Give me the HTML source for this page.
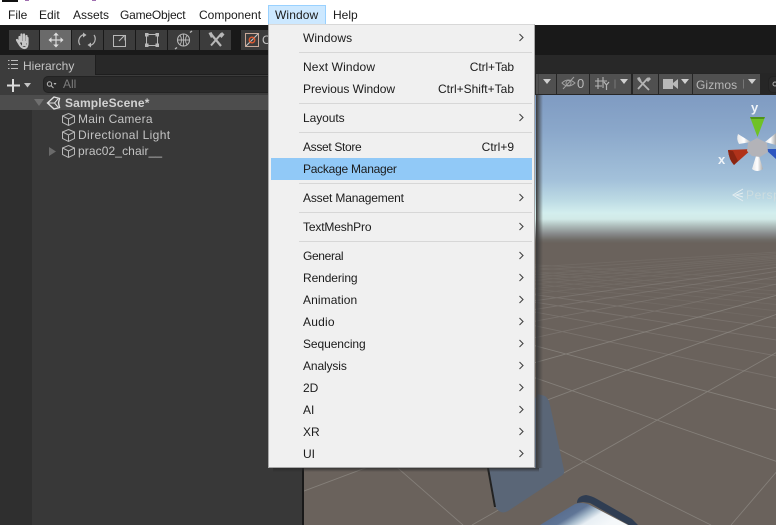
<!DOCTYPE html>
<html><head><meta charset="utf-8">
<style>
html,body{margin:0;padding:0;width:776px;height:525px;overflow:hidden;background:#191919}
body{position:relative;font-family:"Liberation Sans",sans-serif;font-size:12px}
.a{position:absolute}
.t{position:absolute;white-space:nowrap;line-height:16px;height:16px}
.mb{color:#1a1a1a;top:7px}
.b{position:absolute;top:30px;height:20px;width:31px;background:#3c3c3c}
.sb{position:absolute;top:74px;height:20px;background:#505050}
.h{color:#c4c4c4}
.m{color:#1b1b1b;left:303px}
.r{color:#1b1b1b;right:262px}
.sep{position:absolute;left:299px;width:233px;height:1px;background:#d7d7d7}
svg{position:absolute;overflow:visible}
</style></head><body>

<!-- Menu bar -->
<div class="a" style="left:0;top:0;width:776px;height:25px;background:#fff"></div>
<div class="a" style="left:2px;top:0;width:16px;height:2px;background:#111"></div>
<div class="a" style="left:25px;top:0;width:4px;height:1px;background:#a070b0"></div>
<div class="a" style="left:92px;top:0;width:4px;height:1px;background:#a070b0"></div>
<div class="a" style="left:268px;top:5px;width:56px;height:18px;background:#cce8ff;border:1px solid #99d1ff"></div>
<div class="t mb" style="left:8px">File</div>
<div class="t mb" style="left:39px">Edit</div>
<div class="t mb" style="left:73px">Assets</div>
<div class="t mb" style="left:120px;letter-spacing:-.2px">GameObject</div>
<div class="t mb" style="left:199px">Component</div>
<div class="t mb" style="left:275px;letter-spacing:.1px">Window</div>
<div class="t mb" style="left:333px">Help</div>

<!-- Toolbar -->
<div class="a" style="left:0;top:25px;width:776px;height:30px;background:#191919"></div>
<div class="b" style="left:9px;width:30px"></div>
<div class="b" style="left:40px;background:#6a6a6a"></div>
<div class="b" style="left:72px"></div>
<div class="b" style="left:104px"></div>
<div class="b" style="left:136px"></div>
<div class="b" style="left:168px"></div>
<div class="b" style="left:200px"></div>
<div class="b" style="left:241px;width:40px"></div>
<svg style="left:0;top:0" width="300" height="55" fill="none" stroke="#b8b8b8">
 <path d="M19.500 37v5M21.500 34.500v7M24 34.500v7M26.500 36v6M17 40l3 5q2 3 4.500 3t3-4v-6" stroke="#c6c6c6" stroke-width="2.200" stroke-linecap="round"/>
 <path d="M22 41h4v5h-4z" fill="#c6c6c6" stroke="none"/>
 <path d="M56 34v12M50 40h12" stroke="#d8d8d8" stroke-width="1.200"/>
 <path d="M56 32.500l-2.800 3h5.600zM56 47.500l-2.800-3h5.600zM48.500 40l3-2.800v5.600zM63.500 40l-3-2.800v5.600z" fill="#dedede" stroke="none"/>
 <path d="M85 34.500a6.800 6.800 0 0 0-4 10.500M91 45.500a6.800 6.800 0 0 0 4-10.500" stroke-width="1.200" transform="translate(-1 0)"/>
 <path d="M84 32.500l3.500 2.500-3.500 2.500zM92 47.500l-3.500-2.500 3.500-2.500z" fill="#b8b8b8" stroke="none" transform="translate(-1 0)"/>
 <rect x="113.500" y="35.500" width="12" height="11" stroke-width="1"/>
 <path d="M119 41l5-5M120 35.500h5v5" stroke-width="1.100"/>
 <rect x="146.500" y="34.500" width="11" height="11" stroke-width="1"/>
 <path d="M145 33h3.500v3.500h-3.500zM155.500 33h3.500v3.500h-3.500zM145 43.500h3.500v3.500h-3.500zM155.500 43.500h3.500v3.500h-3.500z" fill="#b8b8b8" stroke="none"/>
 <circle cx="183.500" cy="40" r="6" stroke-width="1.100"/>
 <path d="M177 40h13M183.500 33.500v13M180 35q3 5 0 10M187 35q-3 5 0 10" stroke-width=".9"/>
 <path d="M177 47.500l-2 1.500M190 32.500l2-1.500" stroke-width="1.400"/>
 <path d="M211 34l10 12" stroke-width="2.200"/>
 <path d="M221.500 33.500l-10.500 12" stroke-width="2"/>
 <path d="M208.500 33l3-1 2 4-2.500 2zM222 32l2.500 2.500-3 3.500-2.500-2.500z" fill="#b8b8b8" stroke="none"/>
 <rect x="245.500" y="33.500" width="13" height="13" stroke="#c8a898" stroke-width="1"/>
 <path d="M246 46l12-12" stroke="#c8c8c8" stroke-width="1"/>
 <circle cx="252" cy="40" r="2.800" stroke="#e05a30" stroke-width="1.300"/>
</svg>
<div class="t" style="left:262px;top:32px;color:#c4c4c4">C</div>

<!-- Tab row -->
<div class="a" style="left:0;top:55px;width:776px;height:19px;background:#282828"></div>
<div class="a" style="left:0;top:55px;width:95px;height:20px;background:#3c3c3c"></div>
<div class="a" style="left:95px;top:55px;width:1px;height:20px;background:#1e1e1e"></div>
<div class="a" style="left:96px;top:74px;width:206px;height:1px;background:#1e1e1e"></div>
<svg style="left:0;top:55px" width="30" height="20" fill="none" stroke="#bbb"><path d="M11 5.500h7M11 9.500h7M11 13.500h7M8 5.500h1.500M8 9.500h1.500M8 13.500h1.500"/></svg>
<div class="t" style="left:23px;top:58px;color:#c4c4c4">Hierarchy</div>

<!-- Hierarchy -->
<div class="a" style="left:0;top:75px;width:302px;height:20px;background:#3c3c3c"></div>
<div class="a" style="left:43px;top:76px;width:259px;height:15px;background:#2a2a2a;border-radius:5px 0 0 5px;border:1px solid #222;box-sizing:content-box"></div>
<svg style="left:0;top:75px" width="60" height="20" fill="none">
 <path d="M13 4v13M7 10.500h13" stroke="#dcdcdc" stroke-width="2"/>
 <path d="M24 8h7l-3.500 4.500z" fill="#c4c4c4"/>
 <circle cx="49.500" cy="9" r="2.200" stroke="#bbb"/><path d="M51 10.500l2.500 2.500" stroke="#bbb"/><path d="M53.500 8h3l-1.500 2z" fill="#bbb"/>
</svg>
<div class="t" style="left:63px;top:76px;color:#7c7c7c">All</div>
<div class="a" style="left:0;top:95px;width:32px;height:430px;background:#2f2f2f"></div>
<div class="a" style="left:32px;top:95px;width:270px;height:430px;background:#383838"></div>
<div class="a" style="left:0;top:95px;width:302px;height:15px;background:#4d4d4d"></div>
<div class="a" style="left:302px;top:55px;width:2px;height:470px;background:#191919"></div>
<svg style="left:0;top:95px" width="100" height="70" fill="none" stroke="#c6c6c6">
 <path d="M34 4h10l-5 7z" fill="#6f6f6f" stroke="none"/>
 <path d="M47.500 8l6.500-6 5.500 1.500L58.500 8l1 4.500-5.500 1.500z" stroke-width="1.400" stroke="#e0e0e0"/>
 <path d="M48 8h6.500l3.500-4M54.500 8l3.500 4" stroke="#e0e0e0"/>
 <path d="M68.500 18.500l6 2.500v6.500l-6 3-6-3V21zM62.500 21l6 3 6-3M68.500 24v6.500" stroke="#b8b8b8"/>
 <path d="M68.500 34.500l6 2.500v6.500l-6 3-6-3V37zM62.500 37l6 3 6-3M68.500 40v6.500" stroke="#b8b8b8"/>
 <path d="M68.500 50.500l6 2.500v6.500l-6 3-6-3V53zM62.500 53l6 3 6-3M68.500 56v6.500" stroke="#b8b8b8"/>
 <path d="M49 52l7 4.500-7 4.500z" fill="#6a6a6a" stroke="none"/>
</svg>
<div class="t" style="left:65px;top:95px;color:#d2d2d2;font-weight:bold;letter-spacing:.15px">SampleScene*</div>
<div class="t h" style="left:78px;top:111px;letter-spacing:.25px">Main Camera</div>
<div class="t h" style="left:78px;top:127px;letter-spacing:.38px">Directional Light</div>
<div class="t h" style="left:78px;top:143px;letter-spacing:.1px">prac02_chair__</div>

<!-- Scene -->
<div class="a" style="left:304px;top:95px;width:472px;height:430px;overflow:hidden;background:#6a625c">
 <div class="a" style="left:0;top:0;width:472px;height:150px;background:linear-gradient(to bottom,#7f9bc2 0,#8aa7ca 35px,#a3c1da 85px,#bcdae4 105px,#d3eeee 118px,#d2eae8 124px,#b2c2c0 130px,#87898a 139px,#6e6a65 145px,#6a625c 148px)"></div>
 <svg style="left:-304px;top:-95px" width="776" height="525" fill="none" stroke="#908c86" stroke-width=".9">
  <g stroke-opacity=".7"><path d="M137 240L463 525M137 240L711 525M137 240L960 525M137 240L1210 525M975 240L731 525M975 240L472 525M975 240L213 525M975 240L-48 525"/></g>
  <g stroke-opacity=".4"><path d="M137 240L1460 525M137 240L1710 525M137 240L1960 525M137 240L2210 525M975 240L-309 525M975 240L-570 525M975 240L-831 525M975 240L-1092 525"/></g>
  <g stroke-opacity=".2"><path d="M137 240L2460 525M137 240L2710 525M137 240L2960 525M137 240L3210 525M137 240L3460 525M137 240L3710 525M137 240L4210 525M137 240L4710 525M975 240L-1353 525M975 240L-1614 525M975 240L-1875 525M975 240L-2136 525M975 240L-2397 525M975 240L-2658 525M975 240L-3180 525M975 240L-3702 525"/></g>
 </svg>
 <svg style="left:-304px;top:-95px" width="776" height="525" stroke="none">
  <defs>
   <linearGradient id="seat2" x1="0" y1="0" x2="1" y2=".4"><stop offset="0" stop-color="#4c5e80"/><stop offset=".5" stop-color="#5f7596"/><stop offset=".64" stop-color="#a8bccd"/><stop offset=".76" stop-color="#e8eff4"/><stop offset="1" stop-color="#f5f8fa"/></linearGradient>
   <linearGradient id="cg" x1="0" y1="0" x2="1" y2="0"><stop offset="0" stop-color="#e8e8e8"/><stop offset=".5" stop-color="#fff"/><stop offset="1" stop-color="#a8a8a8"/></linearGradient>
  </defs>
  <path d="M538 394L545 396Q549 399 550 405L564 470Q565 474 561 476L508 511Q503 514 499 511L495 507L488 468Z" fill="#5a6677"/>
  <path d="M487 468L489 468L496 507L494 507Z" fill="#222"/>
  <path d="M577 503Q577 496 586 495Q592 496 597 499L632 519L638 525L629 525L590 503L583 502Z" fill="#2f3d52"/>
  <path d="M540 525L575 504Q581 502 588 504L628 525Z" fill="url(#seat2)"/>
  <!-- gizmo -->
  <path d="M750 117L765 117L757.500 137Z" fill="#6fc225"/>
  <path d="M750 117L765 117L764 119L751 119Z" fill="#4f9418"/>
  <path d="M728 150L752 149L734 165Q729 160 728 150Z" fill="#b0321a"/>
  <path d="M728 150L733 151L738 161L734 165Q729 160 728 150Z" fill="#8a2512"/>
  <path d="M765 149L776 149L776 159Z" fill="#2c56c0"/>
  <path d="M738 134L751 142L739 144Q736 139 738 134Z" fill="url(#cg)"/>
  <path d="M776 133L765 142L776 145Z" fill="url(#cg)"/>
  <path d="M752 169Q757 173 763 169L759 156L756 156Z" fill="url(#cg)"/>
  <path d="M748 143L757 138L767 143L768 152L760 157L752 156L747 151Z" fill="#b3b3b8"/>
 </svg>
 <div class="t" style="left:447px;top:5px;color:#f0f4f8;font-weight:bold;font-size:13px">y</div>
 <div class="t" style="left:414px;top:57px;color:#f0f4f8;font-weight:bold;font-size:13px">x</div>
 <svg style="left:428px;top:93px" width="12" height="14" fill="none" stroke="#e4edf0"><path d="M11 1L1 7L11 13M11 5L4 7L11 9"/></svg>
 <div class="t" style="left:442px;top:92px;color:#cddde0;font-size:12px;letter-spacing:.6px">Persp</div>
</div>
<div class="a" style="left:536px;top:95px;width:7px;height:373px;background:linear-gradient(to right,#3a3a3a,rgba(60,60,60,0))"></div>
<div class="a" style="left:273px;top:468px;width:266px;height:4px;background:linear-gradient(to bottom,rgba(40,40,40,.75),rgba(40,40,40,0))"></div>

<!-- Scene toolbar -->
<div class="a" style="left:304px;top:73px;width:472px;height:22px;background:#262626"></div>
<div class="sb" style="left:536px;width:20px"></div>
<div class="sb" style="left:557px;width:32px"></div>
<div class="sb" style="left:590px;width:41px"></div>
<div class="sb" style="left:633px;width:25px"></div>
<div class="sb" style="left:659px;width:33px"></div>
<div class="sb" style="left:693px;width:67px"></div>
<div class="a" style="left:768px;top:76px;width:8px;height:15px;background:#2a2a2a;border-radius:5px 0 0 5px;border:1px solid #222"></div>
<div class="a" style="left:538px;top:74px;width:1px;height:20px;background:#444"></div>
<svg style="left:530px;top:70px" width="246" height="25" fill="none" stroke="#b4b4b4">
 <path d="M13 9h8l-4 5z" fill="#d0d0d0" stroke="none"/>
 <path d="M32 13q6-6 13 0q-7 6-13 0z" stroke="#a0a0a0"/><circle cx="38.500" cy="13" r="2.500" stroke="#a0a0a0"/><path d="M33 19l11-12" stroke="#a0a0a0"/>
 <path d="M68 8v11M73 7v11M65 11h12M65 16h7" stroke-width="1.100"/><path d="M74 12l2.500 3 2.500-3M76.500 15v5" stroke-width="1.200"/>
 <path d="M85 9.500v9" stroke="#777"/><path d="M90 9h8l-4 5z" fill="#d0d0d0" stroke="none"/>
 <path d="M108 9l11 11" stroke-width="1.800"/><path d="M118 8l-10 11" stroke-width="1.800"/><path d="M119 7l2 2-3 3-2-2zM107 8l2.500-1 2 3.500-2 1.500z" fill="#b4b4b4" stroke="none"/>
 <rect x="133" y="9" width="10" height="10" fill="#b8b8b8" stroke="none"/><path d="M143 13l5-4v10l-5-4z" fill="#b8b8b8" stroke="none"/>
 <path d="M151 9h8l-4 5z" fill="#d0d0d0" stroke="none"/>
 <path d="M213.500 9.500v9" stroke="#777"/><path d="M218 9h8l-4 5z" fill="#d0d0d0" stroke="none"/>
 <circle cx="245" cy="14" r="2" stroke="#aaa"/>
</svg>
<div class="t" style="left:577px;top:76px;color:#b8b8b8;font-size:13px">0</div>
<div class="t" style="left:696px;top:77px;color:#b8b8b8;letter-spacing:.1px">Gizmos</div>

<!-- Window menu -->
<div class="a" style="left:268px;top:24px;width:267px;height:444px;background:#f0f0f0;box-sizing:border-box;border:1px solid #a8a8a8;border-top-color:#d8d8d8"></div>
<div class="a" style="left:271px;top:158px;width:261px;height:22px;background:#91c9f7"></div>
<div class="sep" style="top:52px"></div>
<div class="sep" style="top:103px"></div>
<div class="sep" style="top:132px"></div>
<div class="sep" style="top:183px"></div>
<div class="sep" style="top:212px"></div>
<div class="sep" style="top:241px"></div>
<div class="t m" style="top:30px;letter-spacing:.07px">Windows</div>
<div class="t m" style="top:59px;letter-spacing:.13px">Next Window</div><div class="t r" style="top:59px;letter-spacing:-.1px">Ctrl+Tab</div>
<div class="t m" style="top:81px;letter-spacing:-.05px">Previous Window</div><div class="t r" style="top:81px">Ctrl+Shift+Tab</div>
<div class="t m" style="top:110px;letter-spacing:-.07px">Layouts</div>
<div class="t m" style="top:139px;letter-spacing:-.33px">Asset Store</div><div class="t r" style="top:139px">Ctrl+9</div>
<div class="t m" style="top:161px;letter-spacing:-.25px">Package Manager</div>
<div class="t m" style="top:190px;letter-spacing:-.16px">Asset Management</div>
<div class="t m" style="top:219px;letter-spacing:-.15px">TextMeshPro</div>
<div class="t m" style="top:248px;letter-spacing:-.35px">General</div>
<div class="t m" style="top:270px;letter-spacing:-.1px">Rendering</div>
<div class="t m" style="top:292px;letter-spacing:.1px">Animation</div>
<div class="t m" style="top:314px;letter-spacing:.2px">Audio</div>
<div class="t m" style="top:336px;letter-spacing:-.08px">Sequencing</div>
<div class="t m" style="top:358px;letter-spacing:-.12px">Analysis</div>
<div class="t m" style="top:380px">2D</div>
<div class="t m" style="top:402px">AI</div>
<div class="t m" style="top:424px">XR</div>
<div class="t m" style="top:446px">UI</div>
<svg style="left:0;top:0" width="776" height="525" fill="none" stroke="#444" stroke-width="1.100">
 <path d="M519.500 34l3.500 3.500-3.500 3.500M519.500 114l3.500 3.500-3.500 3.500M519.500 194l3.500 3.500-3.500 3.500M519.500 223l3.500 3.500-3.500 3.500M519.500 252l3.500 3.500-3.500 3.500M519.500 274l3.500 3.500-3.500 3.500M519.500 296l3.500 3.500-3.500 3.500M519.500 318l3.500 3.500-3.500 3.500M519.500 340l3.500 3.500-3.500 3.500M519.500 362l3.500 3.500-3.500 3.500M519.500 384l3.500 3.500-3.500 3.500M519.500 406l3.500 3.500-3.500 3.500M519.500 428l3.500 3.500-3.500 3.500M519.500 450l3.500 3.500-3.500 3.500"/>
</svg>
</body></html>
